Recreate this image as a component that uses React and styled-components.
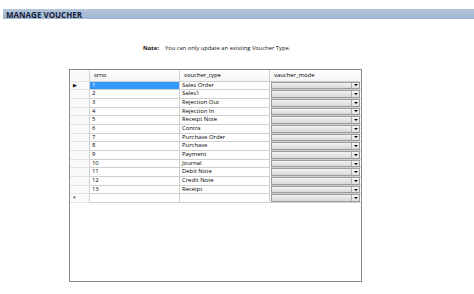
import React from "react";
import styled, { createGlobalStyle } from "styled-components";

const GlobalStyle = createGlobalStyle`
  html, body {
    margin: 0;
    padding: 0;
    background: #ffffff;
    font-family: "Open Sans", "Noto Sans", sans-serif;
  }
`;

const Page = styled.div`
  width: 474px;
  height: 294px;
  padding-top: 9px;
  box-sizing: border-box;
  overflow: hidden;
`;

const TitleBar = styled.div`
  margin-left: 3px;
  height: 10px;
  background: linear-gradient(#b4c6dc, #9fb4cf);
  display: flex;
  align-items: center;
  padding-left: 3px;

  h1 {
    margin: 0;
    font-size: 8px;
    font-weight: 700;
    color: #16223c;
    letter-spacing: 0;
  }
`;

const NoteRow = styled.div`
  margin-top: 25px;
  padding-left: 143px;
  display: flex;
  gap: 6px;
  font-size: 5.8px;
  color: #111;
  line-height: 8px;

  b {
    font-weight: 700;
  }
`;

const Grid = styled.div`
  margin: 17px 0 0 69px;
  width: 293px;
  height: 213px;
  box-sizing: border-box;
  border: 1px solid #8a8a8a;
  background: #ffffff;
`;

const Row = styled.div`
  display: grid;
  grid-template-columns: 20px 90px 90px 1fr;
  height: ${(p) => (p.$head ? "11.5px" : "8.7px")};
`;

const Cell = styled.div`
  box-sizing: border-box;
  border-right: 1px solid ${(p) => (p.$last ? "transparent" : "#cfcfcf")};
  border-bottom: 1px solid #cfcfcf;
  font-size: 5.9px;
  line-height: 7.5px;
  color: ${(p) => (p.$sel ? "#ffffff" : "#000")};
  background: ${(p) => (p.$sel ? "#3399ff" : p.$head ? "linear-gradient(#ffffff, #f3f3f3)" : "#ffffff")};
  white-space: nowrap;
  overflow: hidden;
  display: flex;
  align-items: ${(p) => (p.$head ? "center" : "flex-start")};
  padding-left: ${(p) => (p.$head ? "4px" : "2px")};
`;

const Marker = styled.div`
  box-sizing: border-box;
  border-right: 1px solid #cfcfcf;
  border-bottom: 1px solid #e4e4e4;
  background: #fafafa;
  display: flex;
  align-items: center;
  padding-left: 3px;
  font-size: 5px;
  color: #000;
`;

const ComboCell = styled.div`
  box-sizing: border-box;
  border-bottom: 1px solid #cfcfcf;
  padding: 0 1px 0 1px;
  display: flex;
  align-items: stretch;
`;

const Combo = styled.div`
  flex: 1;
  box-sizing: border-box;
  border: 1px solid #9c9c9c;
  background: linear-gradient(#f2f2f2, #d8d8d8);
  display: flex;
  justify-content: flex-end;
`;

const DropButton = styled.div`
  width: 7px;
  border-left: 1px solid #b0b0b0;
  background: linear-gradient(#f7f7f7, #e0e0e0);
  display: flex;
  align-items: center;
  justify-content: center;

  &::after {
    content: "";
    border-left: 2px solid transparent;
    border-right: 2px solid transparent;
    border-top: 2px solid #000;
  }
`;

const vouchers = [
  "Sales Order",
  "Sales1",
  "Rejection Out",
  "Rejection In",
  "Receipt Note",
  "Contra",
  "Purchase Order",
  "Purchase",
  "Payment",
  "Journal",
  "Debit Note",
  "Credit Note",
  "Receipt",
];

export default function App() {
  return (
    <>
      <GlobalStyle />
      <Page>
        <TitleBar>
          <h1>MANAGE VOUCHER</h1>
        </TitleBar>

        <NoteRow>
          <b>Note:</b>
          <span>You can only update an existing Voucher Type.</span>
        </NoteRow>

        <Grid>
          <Row $head>
            <Marker />
            <Cell $head>srno</Cell>
            <Cell $head>voucher_type</Cell>
            <Cell $head $last>vaucher_mode</Cell>
          </Row>
          {vouchers.map((v, i) => (
            <Row key={v}>
              <Marker>{i === 0 ? "▶" : ""}</Marker>
              <Cell $sel={i === 0}>{i + 1}</Cell>
              <Cell>{v}</Cell>
              <ComboCell>
                <Combo>
                  <DropButton />
                </Combo>
              </ComboCell>
            </Row>
          ))}
          <Row>
            <Marker>*</Marker>
            <Cell />
            <Cell />
            <ComboCell>
              <Combo>
                <DropButton />
              </Combo>
            </ComboCell>
          </Row>
        </Grid>
      </Page>
    </>
  );
}
